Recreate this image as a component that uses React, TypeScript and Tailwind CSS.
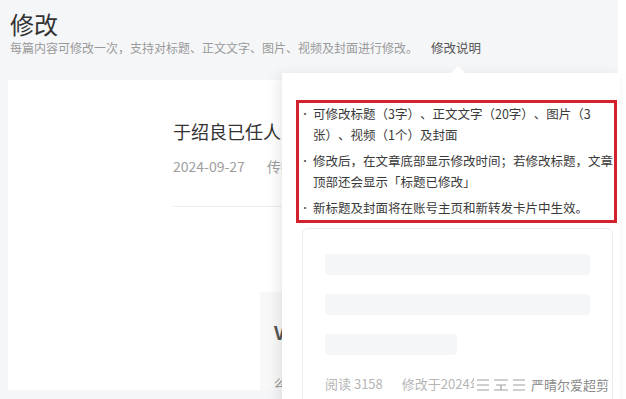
import React from 'react'

const FONT = '"Noto Sans CJK SC", "Noto Sans", sans-serif'

const RULES: string[] = [
  '可修改标题（3字）、正文文字（20字）、图片（3张）、视频（1个）及封面',
  '修改后，在文章底部显示修改时间；若修改标题，文章顶部还会显示「标题已修改」',
  '新标题及封面将在账号主页和新转发卡片中生效。',
]

function Popover() {
  return (
    <div className="absolute left-[282px] top-[73px] h-[340px] w-[338px] bg-white shadow-[-4px_2px_12px_rgba(0,0,0,0.09)]">
      {/* arrow */}
      <div className="absolute left-[171px] top-[-5px] size-[10px] rotate-45 bg-white" />

      <div className="ml-[14px] mt-[27px] w-[321px] border-[3px] border-[#d3222d] pb-[2px] pl-[1px]">
        <ul className="space-y-[5px]">
          {RULES.map((r) => (
            <li key={r} className="flex text-[12.5px] leading-[21px] text-[#3a3a3a] [text-spacing-trim:space-all]">
              <span className="w-[13px] shrink-0 text-[10px] text-[#555]">•</span>
              <span className="w-[300px]">{r}</span>
            </li>
          ))}
        </ul>
      </div>

      <div className="relative ml-[20px] mt-[5px] h-[200px] w-[311px] rounded-[6px] border border-[#ececec] px-[22px] pt-[25px]">
        <div className="flex flex-col gap-[19px]">
          <div className="h-[21px] w-[265px] rounded-sm bg-[#f5f6f8]" />
          <div className="h-[21px] w-[265px] rounded-sm bg-[#f5f6f8]" />
          <div className="h-[21px] w-[132px] rounded-sm bg-[#f5f6f8]" />
        </div>
        <div className="mt-[19px] flex gap-[19px] whitespace-nowrap text-[13px] leading-[20px] text-[#b5b5b5]">
          <span>阅读 3158</span>
          <span className="w-[72px] overflow-hidden">修改于2024年09月30日</span>
        </div>
        {/* watermark */}
        <div className="absolute left-[172px] top-[146px] flex items-center gap-[4px] whitespace-nowrap text-[13px] leading-[20px] text-[#8a8a8a]">
          <svg width="52" height="14" viewBox="0 0 52 14" fill="none" stroke="#a0a0a0" strokeWidth="1.2">
            <path d="M2 2h12M2 7h12M2 12h12" />
            <path d="M19 2h14M21 7h10M19 12h14M26 7v5" />
            <path d="M38 2h12M38 7h12M38 12h12" />
          </svg>
          <span>严晴尔爱超剪</span>
        </div>
      </div>
    </div>
  )
}

export default function App() {
  return (
    <div className="relative h-[399px] w-[626px] overflow-hidden bg-white" style={{ fontFamily: FONT }}>
      <div className="h-full w-[618px] bg-[#f5f6f8]">
        <header className="px-[10px] pt-[9px]">
          <h1 className="text-[24px] font-normal leading-[30px] text-[#333]">修改</h1>
          <p className="whitespace-nowrap text-[12px] leading-[18px] text-[#9a9a9a] [text-spacing-trim:space-all]">
            每篇内容可修改一次，支持对标题、正文文字、图片、视频及封面进行修改。
            <span className="ml-[13px] text-[12.5px] text-[#555]">修改说明</span>
          </p>
        </header>

        <div className="ml-[8px] mt-[23px] h-[310px] w-[600px] bg-white pl-[165px] pt-[38px]">
          <h2 className="w-[109px] overflow-hidden whitespace-nowrap text-[18px] leading-[26px] text-[#333]">
            于绍良已任人民日报社总编辑
          </h2>
          <div className="mt-[12px] flex w-[109px] gap-[22px] overflow-hidden whitespace-nowrap text-[14px] leading-[20px] text-[#9e9e9e]">
            <span>2024-09-27</span>
            <span>传播中</span>
          </div>
          <div className="mt-[30px] h-px w-[300px] bg-[#eeeeee]" />

          <div className="ml-[87px] mt-[85px] h-[98px] w-[120px] bg-[#f8f8f8] pl-[14px] pt-[30px]">
            <div className="text-[18px] font-bold leading-[20px] text-[#555]">V</div>
            <div className="mt-[34px] text-[11px] leading-[14px] text-[#888]">么</div>
          </div>
        </div>
      </div>

      <Popover />
    </div>
  )
}
